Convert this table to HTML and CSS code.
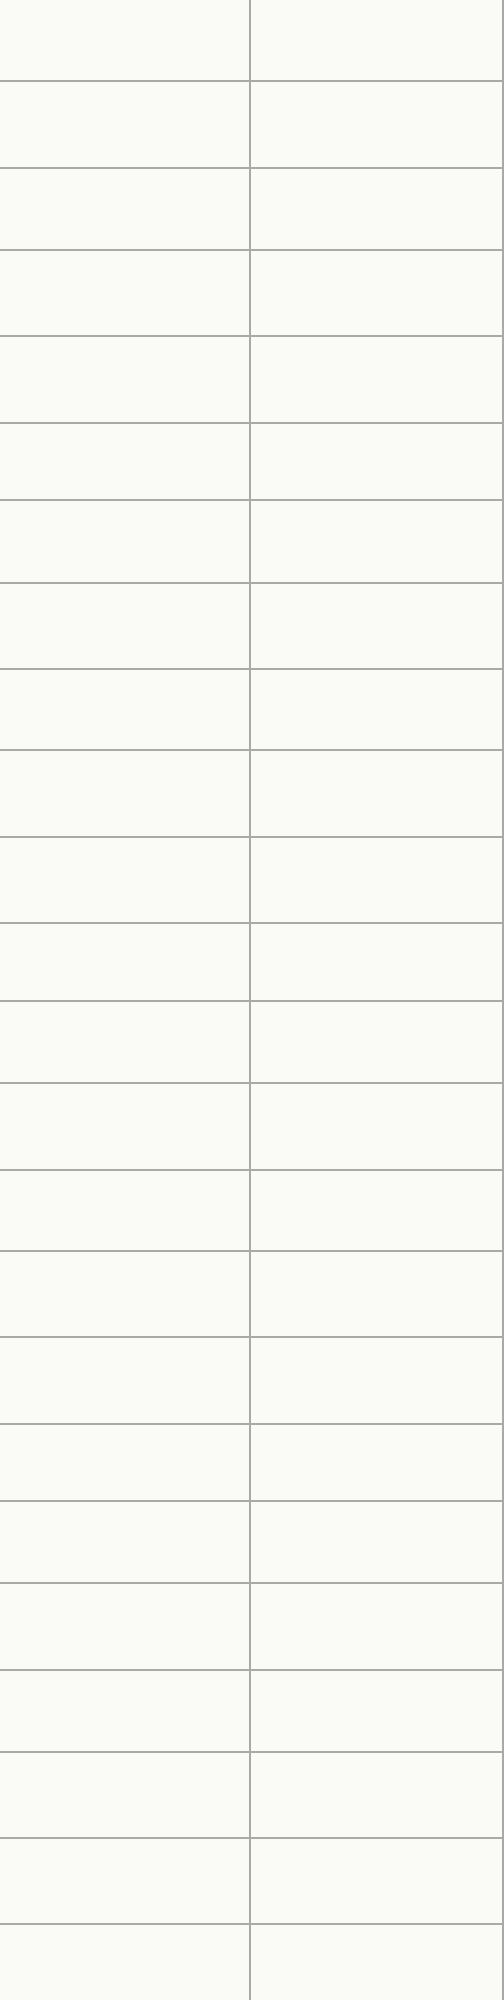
FILE: index.html
```html
<!DOCTYPE html>
<html lang="en">
<head>
<meta charset="utf-8">
<title>Grid</title>
<link rel="stylesheet" href="styles.css">
</head>
<body>
<div class="sheet">
  <div class="cell left"></div><div class="cell right"></div>
  <div class="cell left"></div><div class="cell right"></div>
  <div class="cell left"></div><div class="cell right"></div>
  <div class="cell left"></div><div class="cell right"></div>
  <div class="cell left"></div><div class="cell right"></div>
  <div class="cell left"></div><div class="cell right"></div>
  <div class="cell left"></div><div class="cell right"></div>
  <div class="cell left"></div><div class="cell right"></div>
  <div class="cell left"></div><div class="cell right"></div>
  <div class="cell left"></div><div class="cell right"></div>
  <div class="cell left"></div><div class="cell right"></div>
  <div class="cell left"></div><div class="cell right"></div>
  <div class="cell left"></div><div class="cell right"></div>
  <div class="cell left"></div><div class="cell right"></div>
  <div class="cell left"></div><div class="cell right"></div>
  <div class="cell left"></div><div class="cell right"></div>
  <div class="cell left"></div><div class="cell right"></div>
  <div class="cell left"></div><div class="cell right"></div>
  <div class="cell left"></div><div class="cell right"></div>
  <div class="cell left"></div><div class="cell right"></div>
  <div class="cell left"></div><div class="cell right"></div>
  <div class="cell left"></div><div class="cell right"></div>
  <div class="cell left"></div><div class="cell right"></div>
  <div class="cell left"></div><div class="cell right"></div>
</div>
</body>
</html>
```

FILE: styles.css
```css
html, body {
  margin: 0;
  padding: 0;
  background: #fafaf6;
  font-family: "Liberation Sans", Arial, sans-serif;
}

.sheet {
  display: grid;
  width: 504px;
  grid-template-columns: 251px 253px;
  grid-template-rows: 82px 87px 82px 86px 87px 77px 83px 86px 81px 87px 86px 78px 82px 87px 81px 86px 87px 77px 82px 87px 82px 86px 86px 90px;
  background: #fafaf6;
}

.cell {
  box-sizing: border-box;
  border-bottom: 2px solid #a9a9a9;
  border-right: 2px solid #a9a9a9;
  background: #fafaf7;
}
```
